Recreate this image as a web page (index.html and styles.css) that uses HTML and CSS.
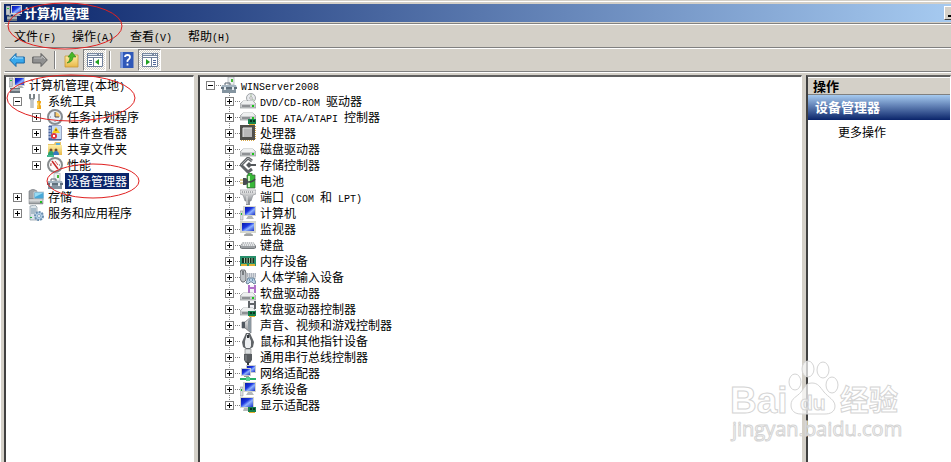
FILE: index.html
```
<!DOCTYPE html>
<html lang="zh-CN">
<head>
  <meta charset="UTF-8">
  <meta name="viewport" content="width=device-width, initial-scale=1.0">
  <title>计算机管理</title>
  <link rel="stylesheet" href="styles.css">
</head>
<body>
  <svg class="sprite" width="0" height="0" aria-hidden="true">
    <defs>
      <linearGradient id="screen" x1="0" y1="0" x2="1" y2="1">
        <stop offset="0" stop-color="#0818a8"/><stop offset=".4" stop-color="#1c38e0"/><stop offset=".6" stop-color="#8fb2ff"/><stop offset="1" stop-color="#1830c8"/>
      </linearGradient>
      <linearGradient id="metal" x1="0" y1="0" x2="0" y2="1">
        <stop offset="0" stop-color="#f4f4f4"/><stop offset="1" stop-color="#8c9094"/>
      </linearGradient>
      <linearGradient id="folder" x1="0" y1="0" x2="0" y2="1">
        <stop offset="0" stop-color="#fff0a8"/><stop offset="1" stop-color="#e8b848"/>
      </linearGradient>
      <g id="drive">
        <path d="M3 8h10l3 3v4H0v-4z" fill="#c8cacc" stroke="#85898c" stroke-width=".6"/>
        <path d="M3 8h10l2 3H1z" fill="#eef0f0"/>
        <path d="M2 13h8" stroke="#55595c"/>
        <path d="M12 12h2v2h-2z" fill="#18c418"/>
      </g>
      <g id="card">
        <path d="M8 10h8v5H8z" fill="#16804c"/>
        <path d="M10 11h2v2h-2zM13 11h2v2h-2z" fill="#0a3420"/>
        <path d="M9 15h6v1H9z" fill="#e8b030"/>
      </g>
      <g id="floppydisk">
        <path d="M8 0h8v8H8z"/>
        <path d="M10 0h4v2h-4zM10 4h4v4h-4z" fill="#f4f4f8"/>
      </g>
    </defs>
    <symbol id="i-manage" viewBox="0 0 16 16">
      <path d="M0 1h4v9H0z" fill="#c2c8cc" stroke="#777" stroke-width=".5"/>
      <path d="M5 0h11v9H5z" fill="#d8d8d0"/>
      <path d="M6 1h9v7H6z" fill="url(#screen)"/>
      <path d="M9 9h4l2 2H7z" fill="#b0b4b8"/>
      <path d="M1 11h10v5H1z" fill="#68747c"/>
      <path d="M4 11V9h4v2M1 13h10" fill="none" stroke="#dfe5e8"/>
      <path d="M1 3h2v1H1z" fill="#20c040"/>
    </symbol>
    <symbol id="i-tools" viewBox="0 0 16 16">
      <path d="M2 1v4l2 2 2-2V1" fill="none" stroke="#7c8488" stroke-width="2"/>
      <path d="M4 6v9" stroke="#9aa0a4" stroke-width="3"/>
      <path d="M4 6v9" stroke="#e4e8ea"/>
      <path d="M10 1h2v8h-2z" fill="#a4a8aa"/>
      <path d="M9 8h4v2l-1 1 1 2v3H9v-3l1-2-1-1z" fill="#f0a818"/>
      <path d="M10 9v6" stroke="#ffe070"/>
    </symbol>
    <symbol id="i-clock" viewBox="0 0 16 16">
      <circle cx="8" cy="8" r="7" fill="#e8f0f8" stroke="#888c90" stroke-width="2"/>
      <path d="M8 8V3a5 5 0 0 1 5 5z" fill="#f8cc70"/>
      <path d="M8 3v5h4" fill="none" stroke="#484c58"/>
      <path d="M3 8h1M8 12v1" stroke="#808890"/>
    </symbol>
    <symbol id="i-event" viewBox="0 0 16 16">
      <path d="M2 1h12v14H2z" fill="#5878b8" stroke="#344c88"/>
      <path d="M5 1h9v13H5z" fill="#c8dcf4"/>
      <path d="M1 3h3M1 6h3M1 9h3M1 12h3" stroke="#e4ecf8"/>
      <path d="M9 2l4 6H5z" fill="#f8cc20"/>
      <path d="M9 4v2" stroke="#443000"/>
      <circle cx="7" cy="11" r="3" fill="#e03840"/>
      <path d="M6 10l2 2m0-2l-2 2" stroke="#fff"/>
    </symbol>
    <symbol id="i-shared" viewBox="0 0 16 16">
      <path d="M1 3h6l1-2h6v12H1z" fill="#e8c468"/>
      <path d="M9 2h4v2H9z" fill="#58b0e0"/>
      <path d="M1 4h14v10H1z" fill="url(#folder)"/>
      <circle cx="4" cy="9" r="1.500" fill="#705030"/><circle cx="9" cy="9" r="1.500" fill="#705030"/>
      <path d="M1 14q0-4 3-4t3 4z" fill="#28a070"/><path d="M6 14q0-4 3-4t3 4z" fill="#3878c0"/>
      <path d="M0 14h7v2H0z" fill="#40b890"/>
    </symbol>
    <symbol id="i-perf" viewBox="0 0 16 16">
      <circle cx="8" cy="8" r="7" fill="#fafafa" stroke="#888c8e" stroke-width="2"/>
      <path d="M5 4l6 8" fill="none" stroke="#c82828" stroke-width="1.500"/>
      <path d="M4 9V6M8 4l3 4" fill="none" stroke="#d85050"/>
      <path d="M3 8h1M12 8h1" stroke="#666"/>
    </symbol>
    <symbol id="i-device" viewBox="0 0 16 16">
      <path d="M7 0h6v8H7z" fill="#eef2f2" stroke="#98a0a4" stroke-width=".6"/>
      <path d="M10 2h2v3h-2z" fill="#48b838"/>
      <path d="M4 8V6h5v2" fill="none" stroke="#586470"/>
      <path d="M1 8h14l1 3H0z" fill="#a4b4c0"/>
      <path d="M0 10h16v2H0z" fill="#60707c"/>
      <path d="M1 12h14v4H1z" fill="#8494a0"/>
      <path d="M3 10h2v3H3zM11 10h2v3h-2z" fill="#e4eaee"/>
    </symbol>
    <symbol id="i-storage" viewBox="0 0 16 16">
      <path d="M1 2l4-2 4 2v8H1z" fill="#a0a4a8" stroke="#70767a" stroke-width=".6"/>
      <path d="M6 3h10v7H6z" fill="#48a8d8" stroke="#c8d0d4"/>
      <path d="M7 4h8L7 8z" fill="#98dcf4"/>
      <path d="M1 10h14v5H1z" fill="url(#metal)" stroke="#74787c" stroke-width=".5"/>
      <path d="M12 12h2v2h-2z" fill="#20c020"/>
    </symbol>
    <symbol id="i-services" viewBox="0 0 16 16">
      <path d="M2 1l5-1 2 2v13H2z" fill="#dce4ea" stroke="#8896a0" stroke-width=".7"/>
      <path d="M3 4h5M3 6h5M3 8h4" stroke="#7894a8"/>
      <circle cx="11" cy="11" r="4" fill="#b4d0e8" stroke="#6c90b0" stroke-width="2" stroke-dasharray="2 1"/>
      <circle cx="11" cy="11" r="1.500" fill="#fff" stroke="#6c90b0" stroke-width=".7"/>
      <path d="M2 12h2v1H2z" fill="#20b040"/>
    </symbol>
    <symbol id="i-dvd" viewBox="0 0 16 16">
      <circle cx="11" cy="5" r="4.500" fill="#e8eaee" stroke="#8c9094" stroke-width=".8"/>
      <circle cx="11" cy="5" r="1.300" fill="#fff" stroke="#888" stroke-width=".6"/>
      <path d="M11 1v3M12 6l3 2" stroke="#a8c0a0"/>
      <use href="#drive"/>
    </symbol>
    <symbol id="i-ide" viewBox="0 0 16 16">
      <use href="#drive" y="-4"/><use href="#card"/>
    </symbol>
    <symbol id="i-cpu" viewBox="0 0 16 16">
      <path d="M1 15h14M15 1v14" stroke="#d8a848" stroke-width="2" stroke-dasharray="1 1"/>
      <path d="M0 0h15v15H0z" fill="#50504c"/>
      <path d="M3 3h9v9H3z" fill="#b8b8b8"/>
      <path d="M3 12V3h9" fill="none" stroke="#e8e8e8"/>
    </symbol>
    <symbol id="i-disk" viewBox="0 0 16 16"><use href="#drive"/></symbol>
    <symbol id="i-controller" viewBox="0 0 16 16">
      <path d="M12 4L8 1 1 8l7 7 4-3" fill="none" stroke="#606468" stroke-width="3"/>
      <path d="M12 4L8 1 1 8" fill="none" stroke="#a8acae"/>
      <path d="M6 8l3-3 2 2h5v2h-5l-2 2z" fill="#54585c"/>
    </symbol>
    <symbol id="i-battery" viewBox="0 0 16 16">
      <path d="M8 0h4v2h3v13H7V2h1z" fill="#38b838" stroke="#405840" stroke-width=".7"/>
      <path d="M9 3v11" stroke="#c8f8b8" stroke-width="2"/>
      <path d="M0 7h3M0 10h3" stroke="#c8a838"/>
      <path d="M3 5h2q3 0 3 3.500T5 12H3z" fill="#484c50"/>
      <path d="M8 9q5 0 7-3" fill="none" stroke="#404448" stroke-width="1.500"/>
    </symbol>
    <symbol id="i-port" viewBox="0 0 16 16">
      <path d="M0 1h16v4l-3 1-2 6H5L3 6 0 5z" fill="url(#metal)" stroke="#888c90" stroke-width=".6"/>
      <path d="M2 3h12" stroke="#6c7074" stroke-dasharray="1 1"/>
      <path d="M8 11v5" stroke="#8c9094" stroke-width="4"/>
      <path d="M7 7v8" stroke="#eee"/>
    </symbol>
    <symbol id="i-pc" viewBox="0 0 16 16">
      <path d="M0 6h3v9H0z" fill="#dce0e2" stroke="#888" stroke-width=".5"/>
      <path d="M1 8h1v2H1z" fill="#18c028"/>
      <path d="M3 1h13v10H3z" fill="#d4d6cc"/>
      <path d="M5 2h10v8H5z" fill="url(#screen)"/>
      <path d="M8 11h4l2 3H6z" fill="#b4b8b8"/>
    </symbol>
    <symbol id="i-monitor" viewBox="0 0 16 16">
      <path d="M0 0h16v12H0z" fill="#d4d6cc"/>
      <path d="M2 2h12v8H2z" fill="url(#screen)"/>
      <path d="M6 12h5l2 3H4z" fill="#b4b8b8"/>
      <path d="M4 14h9" stroke="#888"/>
    </symbol>
    <symbol id="i-keyboard" viewBox="0 0 16 16">
      <path d="M3 5h10l3 4v2l-2 1H2l-2-1V9z" fill="#74787c"/>
      <path d="M3 5h10l2 4H1z" fill="#e4e6e8"/>
      <path d="M3 6h10M2 8h12" stroke="#989ca0" stroke-dasharray="1 1"/>
      <path d="M1 10h14" stroke="#c0c4c8"/>
    </symbol>
    <symbol id="i-memory" viewBox="0 0 16 16">
      <path d="M0 3h16v10H0z" fill="#28906c"/>
      <path d="M2 5h12v5H2z" fill="#183020"/>
      <path d="M4.500 5v5M7 5v5M9.500 5v5M12 5v5" stroke="#a0c0a0"/>
      <path d="M1 11h6v2H1zM9 11h6v2H9z" fill="#e0b030"/>
    </symbol>
    <symbol id="i-hid" viewBox="0 0 16 16">
      <path d="M1 1h4l1 3v7l-2 2H2l-2-3V4z" fill="#c0c4c8" stroke="#505458" stroke-width=".8"/>
      <path d="M3 2v4" stroke="#303438"/>
      <path d="M7 4h9v6H7z" fill="#d4d8dc"/>
      <path d="M7 5h9M7 7h9" stroke="#8890a0" stroke-dasharray="1 1"/>
      <path d="M8 9h6l2 5-2 1-2-2h-2l-2 2-2-1z" fill="#b8d0e4" stroke="#506c84" stroke-width=".8"/>
      <path d="M9 11h1M12 11h1" stroke="#205888"/>
    </symbol>
    <symbol id="i-floppy" viewBox="0 0 16 16">
      <use href="#floppydisk" fill="#b070c8"/><use href="#drive"/>
    </symbol>
    <symbol id="i-floppyctl" viewBox="0 0 16 16">
      <use href="#floppydisk" fill="#606468"/><use href="#drive" y="-1"/><use href="#card"/>
    </symbol>
    <symbol id="i-sound" viewBox="0 0 16 16">
      <path d="M2 5h3l6-5v16l-6-5H2z" fill="url(#metal)" stroke="#686c70" stroke-width=".7"/>
      <path d="M8 4l3-4v16l-3-4z" fill="#8c98a0"/>
      <path d="M2 5h3v6H2z" fill="#505860"/>
    </symbol>
    <symbol id="i-mouse" viewBox="0 0 16 16">
      <path d="M6 0h4l4 9-1 5-3 2H6l-3-2-1-5z" fill="#606468"/>
      <path d="M8 1l3 7v5l-1 2H6l-1-2V8l2-7z" fill="#eceef0"/>
      <path d="M8 2v3" stroke="#303438" stroke-width="2"/>
    </symbol>
    <symbol id="i-usb" viewBox="0 0 16 16">
      <path d="M5 0h6v5H5z" fill="#dce0e2" stroke="#888" stroke-width=".7"/>
      <path d="M4 5h8v6l-2 3H6l-2-3z" fill="#585c60"/>
      <path d="M6 6v6" stroke="#888c90"/>
      <path d="M8 13v3" stroke="#383c40" stroke-width="2"/>
    </symbol>
    <symbol id="i-network" viewBox="0 0 16 16">
      <path d="M6 0h10v8H6z" fill="#c8ccd0"/><path d="M7 1h8v6H7z" fill="url(#screen)"/>
      <path d="M1 3h10v8H1z" fill="#c8ccd0"/><path d="M2 4h8v6H2z" fill="url(#screen)"/>
      <path d="M4 11h5v1H4z" fill="#999"/>
      <path d="M0 14h16" stroke="#28b068" stroke-width="2"/>
      <path d="M6 12h4v4H6z" fill="#58d090"/>
    </symbol>
    <symbol id="i-display" viewBox="0 0 16 16">
      <path d="M0 0h14v11H0z" fill="#d4d6cc"/>
      <path d="M1 1h12v9H1z" fill="url(#screen)"/>
      <path d="M4 11h5v3H3z" fill="#b4b8b8"/>
      <use href="#card"/>
    </symbol>
    <symbol id="i-back" viewBox="0 0 16 16">
      <path d="M.7 8L7 1.500V5h8.300v6H7v3.500z" fill="#38a8ec" stroke="#1868a8"/>
      <path d="M3 7l3-3v2h8" fill="none" stroke="#a8e0ff"/>
    </symbol>
    <symbol id="i-forward" viewBox="0 0 16 16">
      <path d="M15.300 8L9 1.500V5H.7v6H9v3.500z" fill="#909090" stroke="#606060"/>
      <path d="M2 6h8V4l3 3" fill="none" stroke="#c0c0c0"/>
    </symbol>
    <symbol id="i-up" viewBox="0 0 16 16">
      <path d="M1 4h6l1-1h6v12H1z" fill="url(#folder)" stroke="#c89838" stroke-width=".8"/>
      <path d="M3 11q3-1 3-6H4l4-5 4 5h-3q0 5-6 6z" fill="#48b828" stroke="#288018" stroke-width=".6"/>
    </symbol>
    <symbol id="i-pane-left" viewBox="0 0 16 16">
      <path d="M0 1h16v14H0z" fill="#fff"/>
      <path d="M0 1h16v3H0z" fill="#7888a0"/>
      <path d="M1 2.500h9" stroke="#e0e8f0"/><path d="M12 2.500h3" stroke="#fff" stroke-dasharray="1 1"/>
      <path d="M.5 1.500v13h15v-13M6.500 6v9M0 5.500h16" fill="none" stroke="#70809a"/>
      <path d="M2 8.500h3M2 10.500h3M2 12.500h3" stroke="#506898"/>
      <path d="M12 7v6L8 10z" fill="#20a020"/>
    </symbol>
    <symbol id="i-pane-right" viewBox="0 0 16 16">
      <path d="M0 1h16v14H0z" fill="#fff"/>
      <path d="M0 1h16v3H0z" fill="#7888a0"/>
      <path d="M1 2.500h9" stroke="#e0e8f0"/><path d="M12 2.500h3" stroke="#fff" stroke-dasharray="1 1"/>
      <path d="M.5 1.500v13h15v-13M9.500 6v9M0 5.500h16" fill="none" stroke="#70809a"/>
      <path d="M11 8.500h3M11 10.500h3M11 12.500h3" stroke="#506898"/>
      <path d="M4 7v6l4-3z" fill="#20a020"/>
    </symbol>
    <symbol id="i-help" viewBox="0 0 16 16">
      <path d="M1.500 0h13v16h-13z" fill="#3058b8"/>
      <path d="M2 0h2v16H2z" fill="#7898e0"/>
      <path d="M6 5q0-2 2.500-2T11 5q0 1.500-1.500 2.500T8.500 10M8.500 11.500v2" fill="none" stroke="#fff" stroke-width="1.800"/>
    </symbol>
  </svg>

  <div class="window">
    <header class="titlebar">
      <svg class="icon"><use href="#i-manage"/></svg>
      <h1>计算机管理</h1>
      <button class="minimize" type="button" aria-label="最小化"></button>
    </header>

    <nav class="menubar">
      <button type="button">文件<span class="latin">(F)</span></button>
      <button type="button">操作<span class="latin">(A)</span></button>
      <button type="button">查看<span class="latin">(V)</span></button>
      <button type="button">帮助<span class="latin">(H)</span></button>
    </nav>

    <div class="toolbar">
      <button type="button" aria-label="后退"><svg class="icon"><use href="#i-back"/></svg></button>
      <button type="button" aria-label="前进"><svg class="icon"><use href="#i-forward"/></svg></button>
      <span class="divider"></span>
      <button type="button" aria-label="向上"><svg class="icon"><use href="#i-up"/></svg></button>
      <button type="button" class="pressed" aria-label="控制台树"><svg class="icon"><use href="#i-pane-left"/></svg></button>
      <span class="divider"></span>
      <button type="button" aria-label="帮助"><svg class="icon"><use href="#i-help"/></svg></button>
      <button type="button" class="pressed" aria-label="操作窗格"><svg class="icon"><use href="#i-pane-right"/></svg></button>
    </div>

    <main class="panes">
      <section class="pane console">
        <ul class="tree">
          <li>
            <div class="row"><svg class="icon"><use href="#i-manage"/></svg><span class="label">计算机管理<span class="latin">(</span>本地<span class="latin">)</span></span></div>
            <ul class="flush">
              <li>
                <div class="row"><span class="twig"><button class="toggle open" type="button" aria-label="折叠"></button></span><svg class="icon"><use href="#i-tools"/></svg><span class="label">系统工具</span></div>
                <ul>
                  <li class="row"><span class="twig"><button class="toggle" type="button" aria-label="展开"></button></span><svg class="icon"><use href="#i-clock"/></svg><span class="label">任务计划程序</span></li>
                  <li class="row"><span class="twig"><button class="toggle" type="button" aria-label="展开"></button></span><svg class="icon"><use href="#i-event"/></svg><span class="label">事件查看器</span></li>
                  <li class="row"><span class="twig"><button class="toggle" type="button" aria-label="展开"></button></span><svg class="icon"><use href="#i-shared"/></svg><span class="label">共享文件夹</span></li>
                  <li class="row"><span class="twig"><button class="toggle" type="button" aria-label="展开"></button></span><svg class="icon"><use href="#i-perf"/></svg><span class="label">性能</span></li>
                  <li class="row"><span class="twig"></span><svg class="icon"><use href="#i-device"/></svg><span class="label selected">设备管理器</span></li>
                </ul>
              </li>
              <li class="row"><span class="twig"><button class="toggle" type="button" aria-label="展开"></button></span><svg class="icon"><use href="#i-storage"/></svg><span class="label">存储</span></li>
              <li class="row"><span class="twig"><button class="toggle" type="button" aria-label="展开"></button></span><svg class="icon"><use href="#i-services"/></svg><span class="label">服务和应用程序</span></li>
            </ul>
          </li>
        </ul>
      </section>

      <section class="pane devices">
        <ul class="tree dotted">
          <li>
            <div class="row root"><span class="twig"><button class="toggle open" type="button" aria-label="折叠"></button></span><svg class="icon"><use href="#i-device"/></svg><span class="label"><span class="latin">WINServer2008</span></span></div>
            <ul>
              <li class="row"><span class="twig"><button class="toggle" type="button" aria-label="展开"></button></span><svg class="icon"><use href="#i-dvd"/></svg><span class="label"><span class="latin">DVD/CD-ROM </span>驱动器</span></li>
              <li class="row"><span class="twig"><button class="toggle" type="button" aria-label="展开"></button></span><svg class="icon"><use href="#i-ide"/></svg><span class="label"><span class="latin">IDE ATA/ATAPI </span>控制器</span></li>
              <li class="row"><span class="twig"><button class="toggle" type="button" aria-label="展开"></button></span><svg class="icon"><use href="#i-cpu"/></svg><span class="label">处理器</span></li>
              <li class="row"><span class="twig"><button class="toggle" type="button" aria-label="展开"></button></span><svg class="icon"><use href="#i-disk"/></svg><span class="label">磁盘驱动器</span></li>
              <li class="row"><span class="twig"><button class="toggle" type="button" aria-label="展开"></button></span><svg class="icon"><use href="#i-controller"/></svg><span class="label">存储控制器</span></li>
              <li class="row"><span class="twig"><button class="toggle" type="button" aria-label="展开"></button></span><svg class="icon"><use href="#i-battery"/></svg><span class="label">电池</span></li>
              <li class="row"><span class="twig"><button class="toggle" type="button" aria-label="展开"></button></span><svg class="icon"><use href="#i-port"/></svg><span class="label">端口<span class="latin"> (COM </span>和<span class="latin"> LPT)</span></span></li>
              <li class="row"><span class="twig"><button class="toggle" type="button" aria-label="展开"></button></span><svg class="icon"><use href="#i-pc"/></svg><span class="label">计算机</span></li>
              <li class="row"><span class="twig"><button class="toggle" type="button" aria-label="展开"></button></span><svg class="icon"><use href="#i-monitor"/></svg><span class="label">监视器</span></li>
              <li class="row"><span class="twig"><button class="toggle" type="button" aria-label="展开"></button></span><svg class="icon"><use href="#i-keyboard"/></svg><span class="label">键盘</span></li>
              <li class="row"><span class="twig"><button class="toggle" type="button" aria-label="展开"></button></span><svg class="icon"><use href="#i-memory"/></svg><span class="label">内存设备</span></li>
              <li class="row"><span class="twig"><button class="toggle" type="button" aria-label="展开"></button></span><svg class="icon"><use href="#i-hid"/></svg><span class="label">人体学输入设备</span></li>
              <li class="row"><span class="twig"><button class="toggle" type="button" aria-label="展开"></button></span><svg class="icon"><use href="#i-floppy"/></svg><span class="label">软盘驱动器</span></li>
              <li class="row"><span class="twig"><button class="toggle" type="button" aria-label="展开"></button></span><svg class="icon"><use href="#i-floppyctl"/></svg><span class="label">软盘驱动器控制器</span></li>
              <li class="row"><span class="twig"><button class="toggle" type="button" aria-label="展开"></button></span><svg class="icon"><use href="#i-sound"/></svg><span class="label">声音、视频和游戏控制器</span></li>
              <li class="row"><span class="twig"><button class="toggle" type="button" aria-label="展开"></button></span><svg class="icon"><use href="#i-mouse"/></svg><span class="label">鼠标和其他指针设备</span></li>
              <li class="row"><span class="twig"><button class="toggle" type="button" aria-label="展开"></button></span><svg class="icon"><use href="#i-usb"/></svg><span class="label">通用串行总线控制器</span></li>
              <li class="row"><span class="twig"><button class="toggle" type="button" aria-label="展开"></button></span><svg class="icon"><use href="#i-network"/></svg><span class="label">网络适配器</span></li>
              <li class="row"><span class="twig"><button class="toggle" type="button" aria-label="展开"></button></span><svg class="icon"><use href="#i-pc"/></svg><span class="label">系统设备</span></li>
              <li class="row"><span class="twig"><button class="toggle" type="button" aria-label="展开"></button></span><svg class="icon"><use href="#i-display"/></svg><span class="label">显示适配器</span></li>
            </ul>
          </li>
        </ul>
      </section>

      <aside class="pane actions">
        <h2>操作</h2>
        <h3>设备管理器</h3>
        <button type="button">更多操作</button>
      </aside>
    </main>
  </div>

  <!-- red pen marks over the menu and the tree -->
  <svg class="marks" width="150" height="205" aria-hidden="true">
    <ellipse cx="65" cy="26" rx="57" ry="23"/>
    <ellipse cx="71" cy="98" rx="64" ry="23"/>
    <ellipse cx="93" cy="181" rx="46" ry="17"/>
  </svg>

  <svg class="watermark" width="180" height="96">
    <ellipse cx="73" cy="32" rx="6" ry="8"/>
    <ellipse cx="86" cy="19" rx="6" ry="8"/>
    <ellipse cx="101" cy="20" rx="6" ry="8"/>
    <ellipse cx="110" cy="35" rx="6" ry="8"/>
    <path d="M90 33c6 0 8 4 12 9s11 8 11 14-5 8-10 8H79c-6 0-10-3-10-9 0-7 6-8 10-13s5-9 11-9z"/>
    <text x="8" y="63" class="big">Bai</text>
    <text x="78" y="60" class="du">du</text>
    <text x="118" y="61" class="cjk">经验</text>
    <text x="10" y="86" class="url">jingyan.baidu.com</text>
  </svg>
</body>
</html>
```
FILE: styles.css
```
* {
  box-sizing: border-box;
}

body {
  margin: 0;
  position: relative;
  min-height: 100vh;
  overflow: hidden;
  background: #d4d0c8;
  color: #000;
  font-family: "Noto Sans CJK SC", sans-serif;
  font-size: 12px;
  line-height: 16px;
}

button {
  padding: 0;
  border: none;
  background: none;
  color: inherit;
  font: inherit;
}

ul {
  list-style: none;
  margin: 0;
  padding: 0;
}

h1, h2, h3 {
  margin: 0;
  font-size: 13px;
  font-weight: bold;
}

.sprite {
  position: absolute;
}

.icon {
  display: block;
  flex: none;
  width: 16px;
  height: 16px;
}

/* half-width characters, 6px each */
.latin {
  font-family: "Liberation Mono", monospace;
  font-size: 10px;
  white-space: pre;
}

.window {
  display: flex;
  flex-direction: column;
  height: 100vh;
  padding: 2px 0 0 4px;
  border-top: 1px solid #d4d0c8;
  box-shadow: inset 1px 1px #fff;
}

.titlebar {
  display: flex;
  align-items: center;
  gap: 2px;
  height: 20px;
  padding-left: 2px;
  border-top: 1px solid #d4d0c8;
  border-bottom: 1px solid #d4d0c8;
  background: linear-gradient(to right, #0a246a, #a6caf0);
  color: #fff;
}

.minimize {
  width: 16px;
  height: 14px;
  margin: 0 -9px 0 auto;
  border: 1px solid;
  border-color: #fff #404040 #404040 #fff;
  background: linear-gradient(#000, #000) 3px 8px / 6px 2px no-repeat #d4d0c8;
}

.menubar {
  display: flex;
  height: 25px;
  margin-left: 1px;
  padding: 0 1px;
  border-top: 1px solid #808080;
  border-bottom: 1px solid #808080;
  box-shadow: inset 0 1px #fff;
}

.menubar button {
  padding: 3px 8px 0;
}

.toolbar {
  display: flex;
  align-items: center;
  height: 24px;
  margin-left: 1px;
  border-top: 1px solid #fff;
  border-bottom: 1px solid #808080;
}

.toolbar button {
  display: flex;
  align-items: center;
  justify-content: center;
  width: 23px;
  height: 22px;
}

.toolbar .pressed {
  border: 1px solid;
  border-color: #808080 #fff #fff #808080;
  background: repeating-conic-gradient(#fff 0 25%, #d4d0c8 0 50%) 0 0 / 2px 2px;
}

.divider {
  width: 2px;
  height: 18px;
  margin: 0 4px 0 3px;
  border-left: 1px solid #808080;
  border-right: 1px solid #fff;
}

.panes {
  display: grid;
  grid-template-columns: 190px 1fr 145px;
  column-gap: 4px;
  flex: 1;
  min-height: 0;
  padding-top: 2px;
  border-top: 1px solid #fff;
}

.pane {
  overflow: hidden;
  border: 2px solid;
  border-color: #606060 #fff #fff #404040;
  border-right-width: 1px;
  border-bottom: none;
  background: #fff;
}

.console {
  padding-left: 3px;
}

.devices {
  padding-left: 2px;
}

.tree ul {
  padding-left: 19px;
}

.tree .flush {
  padding-left: 0;
}

.row {
  display: flex;
  align-items: center;
  height: 16px;
  white-space: nowrap;
}

.twig {
  display: flex;
  align-items: center;
  flex: none;
  width: 19px;
  height: 16px;
  padding-left: 4px;
}

.dotted .twig {
  background:
    repeating-linear-gradient(to bottom, #808080 0 1px, #fff 1px 2px) 8px 0 / 1px 16px no-repeat,
    repeating-linear-gradient(to right, #808080 0 1px, #fff 1px 2px) 8px 8px / 11px 1px no-repeat;
}

.dotted .row:last-child .twig {
  background-size: 1px 8px, 11px 1px;
}

.dotted .root .twig {
  background-size: 0 0, 11px 1px;
}

.toggle {
  width: 9px;
  height: 9px;
  border: 1px solid #808080;
  background:
    linear-gradient(#000, #000) center / 5px 1px no-repeat,
    linear-gradient(#000, #000) center / 1px 5px no-repeat,
    #fff;
}

.toggle.open {
  background: linear-gradient(#000, #000) center / 5px 1px no-repeat #fff;
}

.label {
  height: 16px;
  margin-left: 2px;
  padding: 0 2px;
}

.selected {
  background: #0a246a;
  color: #fff;
}

.actions h2 {
  height: 18px;
  padding-left: 5px;
  border-top: 1px solid #fff;
  border-bottom: 1px solid #808080;
  background: #d4d0c8;
}

.actions h3 {
  height: 25px;
  padding-left: 7px;
  background: linear-gradient(#a6caf0, #0a246a);
  color: #fff;
  line-height: 24px;
}

.actions button {
  display: block;
  padding: 4px 30px;
}

.marks {
  position: absolute;
  top: 0;
  left: 0;
  fill: none;
  stroke: #e02020;
  pointer-events: none;
}

.watermark {
  position: absolute;
  right: 49px;
  bottom: 16px;
  fill: #fff;
  fill-opacity: .7;
  stroke: #d4d4d4;
  pointer-events: none;
}

.watermark .big {
  font-family: "Liberation Sans", sans-serif;
  font-size: 37px;
  font-weight: bold;
}

.watermark .du {
  font-family: "Liberation Sans", sans-serif;
  font-size: 21px;
  font-weight: bold;
}

.watermark .cjk {
  font-size: 29px;
  font-weight: bold;
}

.watermark .url {
  font-family: "Open Sans", sans-serif;
  font-size: 20px;
}
```
